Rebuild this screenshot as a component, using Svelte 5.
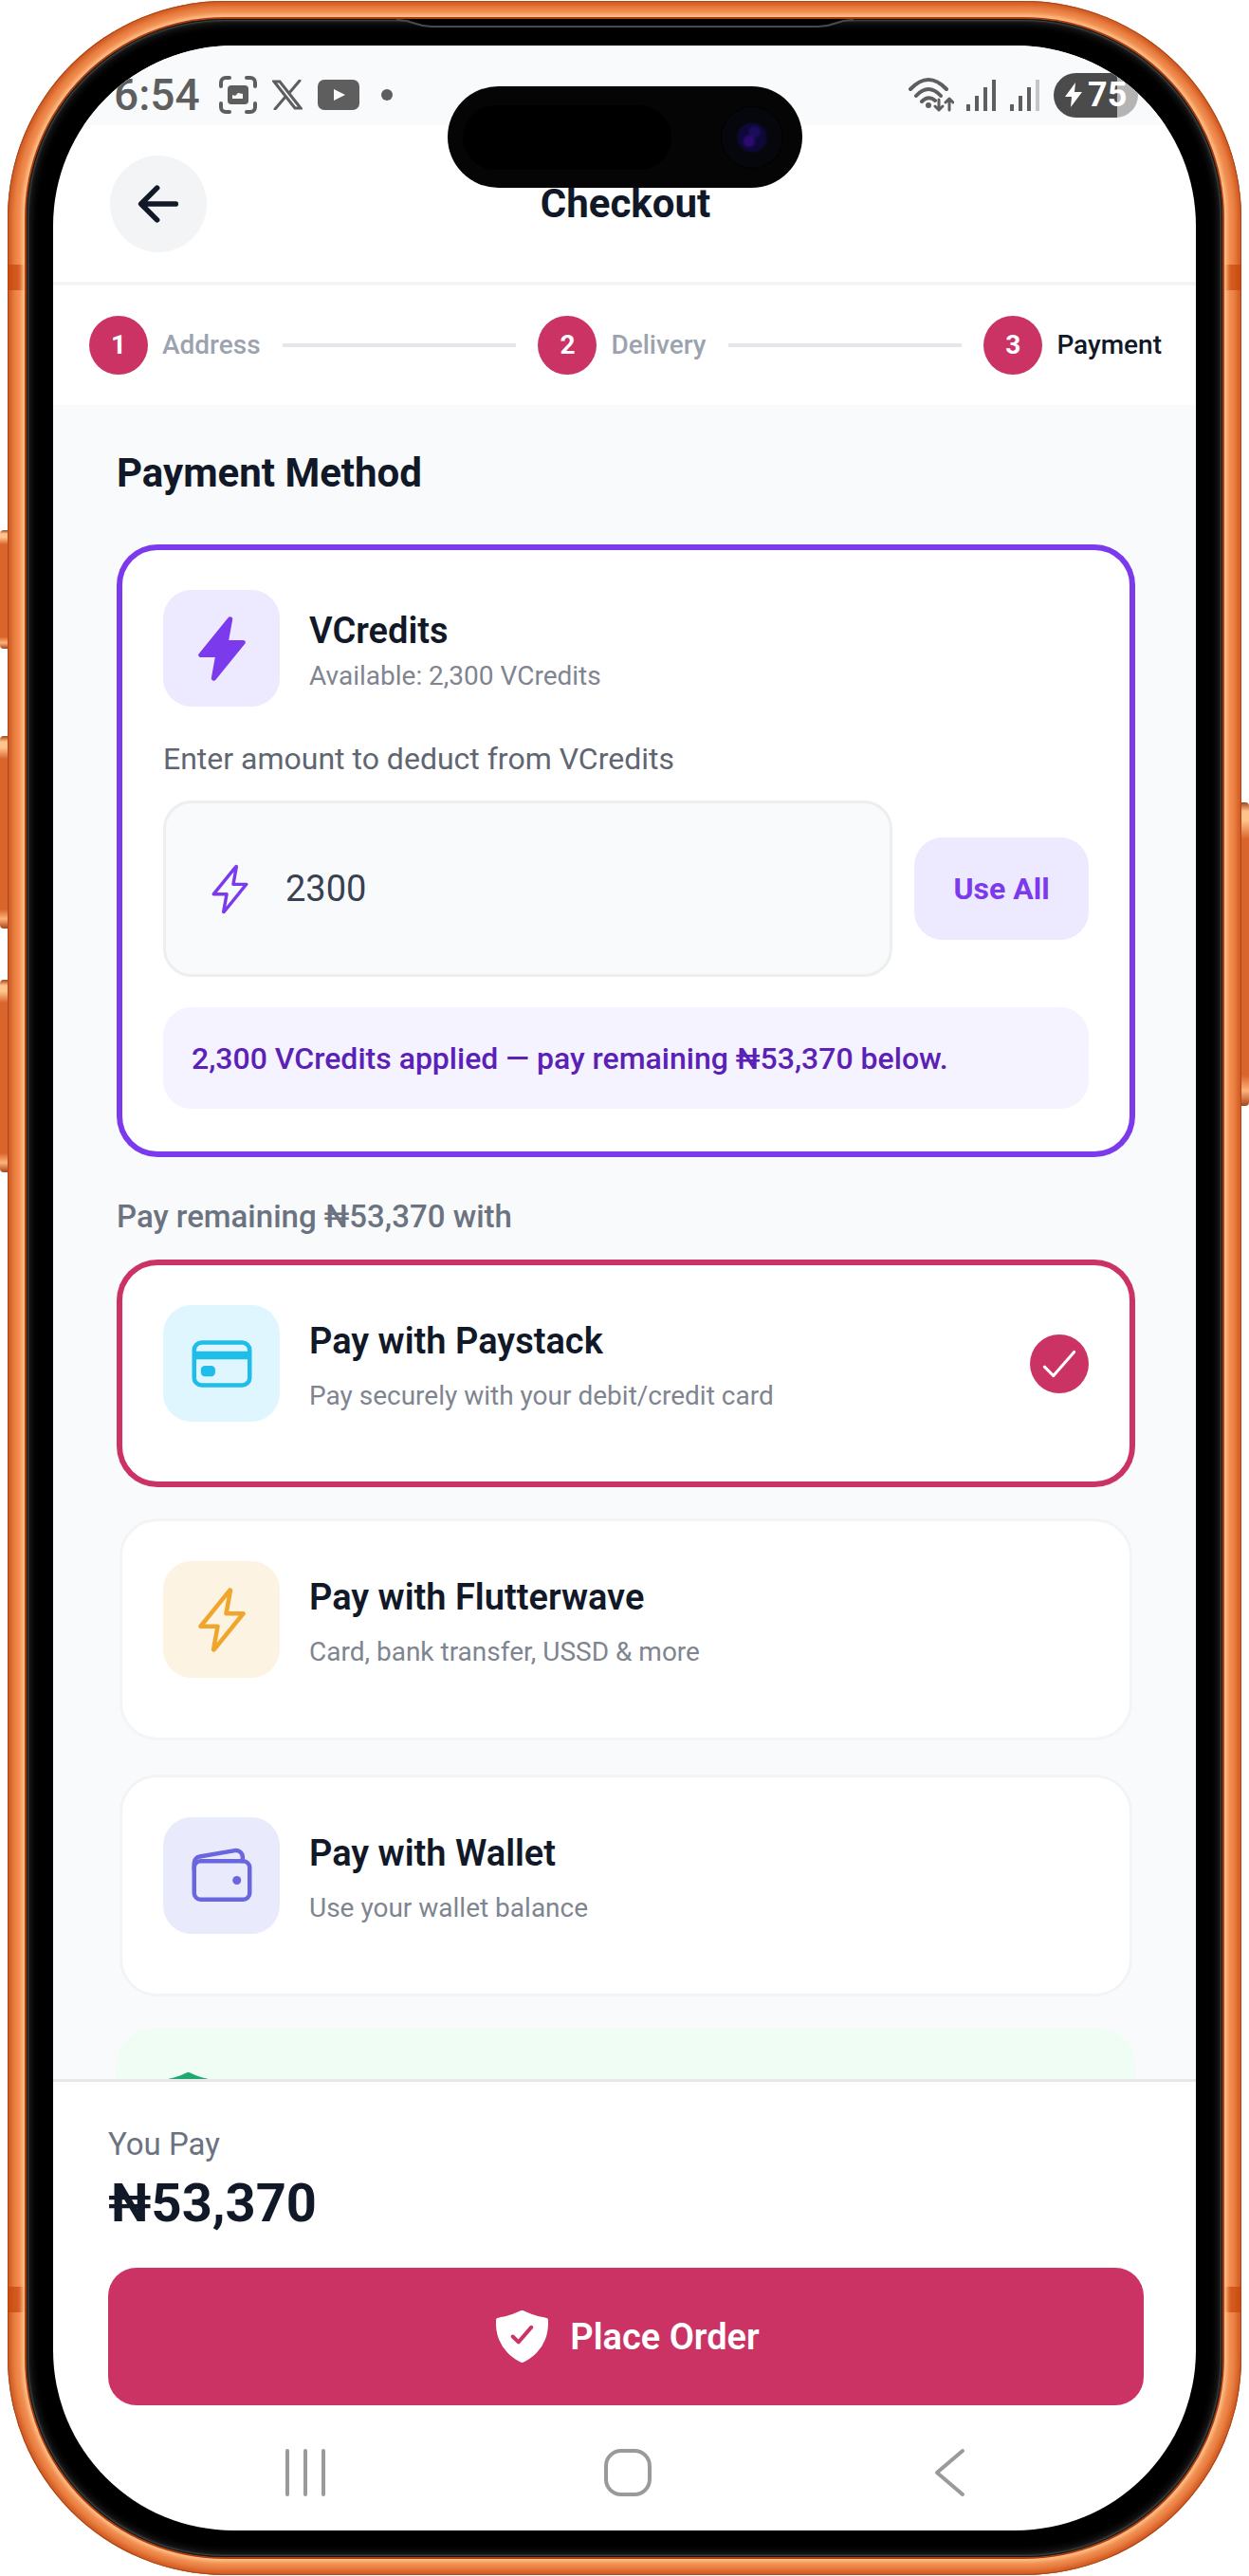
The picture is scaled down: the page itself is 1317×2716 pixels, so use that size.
<script lang="ts">
  type MethodIcon = "card" | "flash" | "wallet";

  interface PaymentMethod {
    id: string;
    title: string;
    hint: string;
    icon: MethodIcon;
  }

  const steps = ["Address", "Delivery", "Payment"];

  const methods: PaymentMethod[] = [
    {
      id: "paystack",
      title: "Pay with Paystack",
      hint: "Pay securely with your debit/credit card",
      icon: "card",
    },
    {
      id: "flutterwave",
      title: "Pay with Flutterwave",
      hint: "Card, bank transfer, USSD & more",
      icon: "flash",
    },
    {
      id: "wallet",
      title: "Pay with Wallet",
      hint: "Use your wallet balance",
      icon: "wallet",
    },
  ];

  const total = 55670;
  const available = 2300;

  let currentStep = $state(2);
  let selected = $state("paystack");
  let credits = $state("2300");

  const applied = $derived(Math.min(Number(credits) || 0, available));
  const remaining = $derived(total - applied);

  const format = (value: number) => value.toLocaleString("en-US");
</script>

{#snippet flash(filled: boolean)}
  <svg class="icon" class:filled viewBox="0 0 512 512" aria-hidden="true">
    <path
      d="M315.27 33L96 304h128l-31.51 173.23a2.36 2.36 0 002.33 2.77h0a2.36 2.36 0 001.89-.95L416 208H288l31.66-173.25a2.45 2.45 0 00-2.44-2.75h0a2.42 2.42 0 00-1.95 1z"
    />
  </svg>
{/snippet}

{#snippet shield()}
  <svg class="shield" viewBox="0 0 512 512" aria-hidden="true">
    <path
      d="M479.07 111.36a16 16 0 00-13.15-14.74c-86.5-15.52-122.61-26.74-203.33-63.2a16 16 0 00-13.18 0C168.69 69.88 132.58 81.1 46.08 96.62a16 16 0 00-13.15 14.74c-3.85 61.11 4.36 118.05 24.43 169.24A349.47 349.47 0 00129 393.11c53.47 56.73 110.24 81.37 121.07 85.73a16 16 0 0012 0c10.83-4.36 67.6-29 121.07-85.73A349.47 349.47 0 00454.64 280.6c20.07-51.19 28.28-108.13 24.43-169.24zm-131 75.11l-110.8 128a16 16 0 01-11.41 5.53h-.66a16 16 0 01-11.2-4.57l-49.2-48.2a16 16 0 1122.4-22.86l37 36.29 99.7-115.13a16 16 0 0124.17 20.94z"
    />
  </svg>
{/snippet}

{#snippet signal(last: string)}
  <svg class="signal" viewBox="0 0 33 34" aria-hidden="true">
    <path d="M2 27v7M11 18v16M20 9v25" />
    <path class={last} d="M29 1v33" />
  </svg>
{/snippet}

<div class="device">
  <span class="key key-action"></span>
  <span class="key key-up"></span>
  <span class="key key-down"></span>
  <span class="key key-power"></span>
  <span class="antenna antenna-top"></span>
  <span class="antenna antenna-bottom"></span>

  <div class="bezel">
    <svg class="speaker" viewBox="0 0 520 12" aria-hidden="true">
      <path class="speaker-gap" d="M20 0C38 0 38 8 56 8H464C482 8 482 0 500 0z" />
      <path d="M20 1C38 1 38 8 56 8H464C482 8 482 1 500 1" />
    </svg>

    <div class="screen">
      <div class="status-bar">
        <div class="status-group">
          <span class="clock">6:54</span>
          <svg class="status-shot" viewBox="0 0 40 40" aria-hidden="true">
            <path
              class="line"
              d="M2 11V7a5 5 0 015-5h4M29 2h4a5 5 0 015 5v4M38 29v4a5 5 0 01-5 5h-4M11 38H7a5 5 0 01-5-5v-4"
            />
            <rect x="9" y="10" width="22" height="20" rx="4" />
            <path class="hole" d="M14 24v-4l3 1 3-3 5 1v5z" />
          </svg>
          <svg class="status-x" viewBox="0 0 32 32" aria-hidden="true">
            <path class="line" d="M2 2h6l22 28h-6zM29 1L18 14M14 18L3 31" />
          </svg>
          <svg class="status-video" viewBox="0 0 44 32" aria-hidden="true">
            <rect width="44" height="32" rx="7" />
            <path class="hole" d="M17 10l12 6-12 6z" />
          </svg>
          <span class="status-dot"></span>
        </div>
        <div class="status-group status-right">
          <svg class="status-wifi" viewBox="0 0 48 36" aria-hidden="true">
            <path class="line" d="M2 12Q21-8 40 12M8 19Q21 5 34 19M14 25Q21 18 28 24" />
            <circle cx="21" cy="29" r="3" />
            <path class="line thin" d="M32 23v11M28 30l4 4 4-4M43 34V22M39 26l4-4 4 4" />
          </svg>
          {@render signal("full")}
          {@render signal("faint")}
          <span class="battery">
            <svg viewBox="0 0 20 28" aria-hidden="true">
              <path d="M12 1L1 16h7l-1 11 12-16h-8z" />
            </svg>
            75
          </span>
        </div>
      </div>

      <header class="header">
        <button class="back" type="button" aria-label="Go back">
          <svg viewBox="0 0 512 512" aria-hidden="true">
            <path d="M244 400L100 256l144-144M120 256h292" />
          </svg>
        </button>
        <h1>Checkout</h1>
      </header>

      <ol class="stepper">
        {#each steps as step, index}
          {#if index > 0}
            <li class="step-line" aria-hidden="true"></li>
          {/if}
          <li class="step" class:current={index === currentStep}>
            <span class="step-number">{index + 1}</span>
            {step}
          </li>
        {/each}
      </ol>

      <main class="content">
        <h2>Payment Method</h2>

        <section class="card credits">
          <div class="card-head">
            <span class="tile tile-violet">{@render flash(true)}</span>
            <div class="card-text">
              <h3>VCredits</h3>
              <p>Available: {format(available)} VCredits</p>
            </div>
          </div>
          <label class="field-label" for="credits">Enter amount to deduct from VCredits</label>
          <div class="field-row">
            <div class="field">
              {@render flash(false)}
              <input id="credits" type="text" inputmode="numeric" bind:value={credits} />
            </div>
            <button class="use-all" type="button" onclick={() => (credits = String(available))}>
              Use All
            </button>
          </div>
          <p class="applied">
            {format(applied)} VCredits applied — pay remaining ₦{format(remaining)} below.
          </p>
        </section>

        <p class="remaining">Pay remaining ₦{format(remaining)} with</p>

        <div class="methods" role="radiogroup" aria-label="Payment provider">
          {#each methods as method (method.id)}
            <label class="card method" class:selected={selected === method.id}>
              <input type="radio" name="method" value={method.id} bind:group={selected} />
              <span class={`tile tile-${method.icon}`}>
                {#if method.icon === "card"}
                  <svg class="icon" viewBox="0 0 512 512" aria-hidden="true">
                    <rect x="48" y="96" width="416" height="320" rx="56" />
                    <path class="heavy" d="M48 192h416M128 300h48v20h-48z" />
                  </svg>
                {:else if method.icon === "flash"}
                  {@render flash(false)}
                {:else}
                  <svg class="icon" viewBox="0 0 512 512" aria-hidden="true">
                    <rect x="48" y="144" width="416" height="288" rx="48" />
                    <path
                      d="M411.36 144v-30A50 50 0 00352 64.9L88.64 109.85A50 50 0 0048 159v49"
                    />
                    <circle class="dot" cx="368" cy="288" r="32" />
                  </svg>
                {/if}
              </span>
              <span class="card-text">
                <span class="method-title">{method.title}</span>
                <span class="method-hint">{method.hint}</span>
              </span>
              {#if selected === method.id}
                <span class="check">
                  <svg viewBox="0 0 512 512" aria-hidden="true">
                    <path d="M416 128L192 384l-96-96" />
                  </svg>
                </span>
              {/if}
            </label>
          {/each}
        </div>

        <div class="secure">{@render shield()}</div>
      </main>

      <footer class="footer">
        <p class="pay-label">You Pay</p>
        <p class="pay-amount">₦{format(remaining)}</p>
        <button class="place-order" type="button">
          {@render shield()}
          Place Order
        </button>
      </footer>

      <nav class="system-nav" aria-label="System">
        <button type="button" aria-label="Recent apps">
          <svg viewBox="0 0 52 52" aria-hidden="true"><path d="M7 3v46M26 3v46M45 3v46" /></svg>
        </button>
        <button type="button" aria-label="Home">
          <svg viewBox="0 0 52 52" aria-hidden="true">
            <rect x="3" y="3" width="46" height="46" rx="16" />
          </svg>
        </button>
        <button type="button" aria-label="Back">
          <svg viewBox="0 0 52 52" aria-hidden="true"><path d="M38 3L11 26l27 23" /></svg>
        </button>
      </nav>

      <div class="island">
        <span class="sensor"></span>
        <span class="lens"></span>
      </div>
    </div>
  </div>
</div>

<style>
  :global(body) {
    background: #ffffff;
  }

  .device {
    --ink: #111827;
    --muted: #6b7280;
    --brand: #cb3365;
    --violet: #7c3aed;
    --line: #e5e7eb;
    --soft: #f3f4f6;
    --surface: #f9fafb;

    box-sizing: border-box;
    position: relative;
    height: 100vh;
    border: solid transparent;
    border-width: 1px 8px;
    padding: 19px 20px;
    border-radius: 237px / 230px;
    background: #f08a4c padding-box;
    font-family: Roboto, "Liberation Sans", sans-serif;
    color: var(--ink);
  }
  .device *,
  .device *::before {
    box-sizing: border-box;
  }
  .device::before {
    content: "";
    position: absolute;
    inset: 0;
    border-radius: 229px;
    box-shadow:
      inset 0 0 0 1px #a8481c,
      inset 0 0 6px 5px #cf571f;
  }
  h1,
  h2,
  h3,
  p,
  ol {
    margin: 0;
    padding: 0;
  }
  button {
    border: 0;
    padding: 0;
    font: inherit;
    color: inherit;
    cursor: pointer;
  }
  svg {
    display: block;
    flex: none;
    fill: none;
    stroke: currentColor;
    stroke-linecap: round;
    stroke-linejoin: round;
  }

  /* hardware */
  .key {
    position: absolute;
    width: 8px;
    left: -8px;
    border-radius: 4px 0 0 4px;
    background: linear-gradient(#a8441a, #ffc48c 3%, #ffc48c 6%, #d9652c 12%, #d9652c 90%, #ffb27a 95%, #a8441a);
  }
  .key-action {
    top: 558px;
    height: 125px;
  }
  .key-up {
    top: 775px;
    height: 203px;
  }
  .key-down {
    top: 1032px;
    height: 203px;
  }
  .key-power {
    top: 845px;
    right: -8px;
    left: auto;
    height: 320px;
    border-radius: 0 4px 4px 0;
  }
  .antenna {
    position: absolute;
    right: 0;
    left: 0;
    height: 27px;
    background: rgba(196, 66, 8, 0.65);
  }
  .antenna-top {
    top: 278px;
  }
  .antenna-bottom {
    bottom: 277px;
  }
  .bezel {
    position: relative;
    height: 100%;
    padding: 28px;
    border-radius: 209px;
    background: #000000;
    box-shadow:
      inset 0 0 0 1px #141414,
      inset 0 0 2px 2px #4a4a4a,
      inset 0 0 8px 4px #262626,
      0 0 0 2px #ad3d0c,
      0 0 4px 5px #ffc48e;
  }
  .speaker {
    position: absolute;
    top: 0;
    left: 50%;
    width: 520px;
    height: 12px;
    transform: translateX(-50%);
    color: #4a4a4a;
    stroke-width: 2;
  }
  .speaker-gap {
    fill: #000000;
    stroke: none;
  }
  .screen {
    position: relative;
    display: flex;
    flex-direction: column;
    height: 100%;
    overflow: hidden;
    border-radius: 190px;
    background: #ffffff;
  }
  .island {
    position: absolute;
    top: 43px;
    left: 50%;
    display: flex;
    align-items: center;
    justify-content: space-between;
    width: 374px;
    height: 107px;
    padding: 0 20px 0 16px;
    border-radius: 54px;
    background: #050505;
    transform: translateX(-50%);
  }
  .sensor {
    width: 220px;
    height: 68px;
    border-radius: 34px;
    background: #000000;
  }
  .lens {
    width: 66px;
    height: 66px;
    border: 1px solid #000000;
    border-radius: 50%;
    background:
      radial-gradient(circle at 45% 56%, #2c0a70 0 4px, transparent 8px),
      radial-gradient(circle at 54% 41%, #1b0d5c 0 4px, transparent 8px),
      radial-gradient(circle, #0d0838 0 14px, #06070c 17px);
  }

  /* status bar */
  .status-bar {
    display: flex;
    flex: none;
    align-items: center;
    justify-content: space-between;
    height: 84px;
    padding: 20px 61px 0 64px;
    background: var(--surface);
    color: #5e5e5e;
  }
  .status-group {
    display: flex;
    align-items: center;
    gap: 16px;
  }
  .status-right {
    gap: 13px;
  }
  .clock {
    margin-right: 4px;
    font-size: 46px;
    font-weight: 500;
    line-height: 52px;
  }
  .status-group svg {
    fill: currentColor;
    stroke: none;
  }
  .status-group .line {
    fill: none;
    stroke: currentColor;
    stroke-width: 4;
  }
  .status-group .thin {
    stroke-width: 3;
  }
  .status-group .hole {
    fill: var(--surface);
  }
  .status-shot {
    width: 40px;
    height: 40px;
  }
  .status-x {
    width: 32px;
    height: 32px;
  }
  .status-x .line {
    stroke-width: 3;
    stroke-linejoin: miter;
  }
  .status-video {
    width: 44px;
    height: 32px;
  }
  .status-dot {
    width: 12px;
    height: 12px;
    margin-left: 7px;
    border-radius: 50%;
    background: currentColor;
  }
  .status-wifi {
    width: 48px;
    height: 36px;
  }
  .signal {
    width: 33px;
    height: 34px;
  }
  .status-group .signal path {
    stroke: currentColor;
    stroke-width: 4;
    stroke-linecap: butt;
  }
  .status-group .signal .faint {
    stroke: #c4c5c6;
  }
  .battery {
    display: flex;
    align-items: center;
    gap: 5px;
    width: 89px;
    height: 47px;
    padding-left: 11px;
    border-radius: 24px;
    background: linear-gradient(90deg, #4b4b4b 75%, #b4b4b4 75%);
    color: #ffffff;
    font-size: 36px;
    font-weight: 700;
    line-height: 47px;
  }
  .battery svg {
    width: 20px;
    height: 28px;
  }

  /* header */
  .header {
    display: grid;
    flex: none;
    grid-template-columns: 102px 1fr 102px;
    align-items: center;
    padding: 32px 58px 31px 60px;
    border-bottom: 4px solid var(--soft);
  }
  .back {
    display: grid;
    place-items: center;
    width: 102px;
    height: 102px;
    border-radius: 50%;
    background: var(--soft);
  }
  .back svg {
    width: 60px;
    height: 60px;
    stroke-width: 48;
  }
  h1,
  h2 {
    font-size: 42px;
    font-weight: 700;
    line-height: 50px;
  }
  h1 {
    text-align: center;
  }

  .stepper {
    display: flex;
    flex: none;
    align-items: center;
    gap: 23px;
    padding: 32px 36px 32px 38px;
    list-style: none;
  }
  .step {
    display: flex;
    align-items: center;
    gap: 15px;
    color: #9ca3af;
    font-size: 28px;
    font-weight: 500;
    line-height: 36px;
  }
  .step.current {
    color: var(--ink);
  }
  .step-number {
    display: grid;
    place-items: center;
    width: 62px;
    height: 62px;
    border-radius: 50%;
    background: var(--brand);
    color: #ffffff;
    font-weight: 700;
  }
  .step-line {
    flex: 1;
    height: 4px;
    background: var(--line);
  }

  /* content */
  .content {
    flex: 1;
    min-height: 0;
    overflow: hidden;
    padding: 47px 64px 0 67px;
    background: var(--surface);
  }
  .card {
    margin: 3px;
    border: 3px solid var(--soft);
    border-radius: 40px;
    background: #ffffff;
  }
  .credits {
    margin-top: 53px;
    padding: 42px 43px 45px;
    border-color: var(--violet);
    box-shadow: 0 0 0 3px var(--violet);
  }
  .card-head {
    display: flex;
    align-items: center;
    gap: 31px;
  }
  .tile {
    display: grid;
    flex: none;
    place-items: center;
    width: 123px;
    height: 123px;
    border-radius: 30px;
  }
  .icon {
    width: 72px;
    height: 72px;
    stroke-width: 32;
  }
  .icon.filled {
    fill: currentColor;
  }
  .icon .heavy {
    stroke-width: 60;
    stroke-linecap: butt;
  }
  .icon .dot {
    fill: currentColor;
    stroke: none;
  }
  .tile-violet {
    background: #ede9fe;
    color: var(--violet);
  }
  .tile-card {
    background: #dff6ff;
    color: #1fbdea;
  }
  .tile-flash {
    background: #fdf3e3;
    color: #f0a52c;
  }
  .tile-wallet {
    background: #eaeafd;
    color: #6a66e0;
  }
  .card-text {
    display: flex;
    flex: 1;
    flex-direction: column;
    gap: 8px;
    padding-top: 6px;
  }
  h3,
  .method-title {
    font-size: 38px;
    font-weight: 600;
    line-height: 44px;
  }
  .card-text p,
  .method-hint {
    color: #7f8590;
    font-size: 28px;
    line-height: 36px;
  }
  .field-label {
    display: block;
    margin: 35px 0 24px;
    color: #5f6672;
    font-size: 32px;
    line-height: 40px;
  }
  .field-row {
    display: flex;
    align-items: center;
    gap: 23px;
  }
  .field {
    display: flex;
    flex: 1;
    align-items: center;
    gap: 31px;
    min-width: 0;
    height: 186px;
    padding: 0 40px;
    border: 3px solid #eceef0;
    border-radius: 30px;
    background: var(--surface);
    color: var(--violet);
  }
  .field .icon {
    width: 55px;
    height: 55px;
  }
  .field input {
    flex: 1;
    min-width: 0;
    border: 0;
    padding: 0;
    outline: none;
    background: none;
    color: #374151;
    font: inherit;
    font-size: 38px;
    line-height: 44px;
  }
  .use-all {
    width: 184px;
    height: 108px;
    border-radius: 30px;
    background: #ede9fe;
    color: var(--violet);
    font-size: 32px;
    font-weight: 700;
  }
  .applied {
    margin-top: 32px;
    padding: 34px 30px 33px;
    border-radius: 30px;
    background: #f5f3ff;
    color: #5b21b6;
    font-size: 32px;
    font-weight: 500;
    line-height: 40px;
  }
  .remaining {
    margin: 46px 0 25px;
    color: var(--muted);
    font-size: 33px;
    font-weight: 500;
    line-height: 40px;
  }
  .methods {
    display: flex;
    flex-direction: column;
    gap: 30px;
  }
  .method {
    position: relative;
    display: flex;
    align-items: center;
    gap: 31px;
    padding: 42px 43px 63px;
    cursor: pointer;
  }
  .method.selected {
    border-color: var(--brand);
    box-shadow: 0 0 0 3px var(--brand);
  }
  .method input {
    position: absolute;
    opacity: 0;
  }
  .method .card-text {
    gap: 18px;
  }
  .check {
    display: grid;
    place-items: center;
    width: 62px;
    height: 62px;
    border-radius: 50%;
    background: var(--brand);
    color: #ffffff;
  }
  .check svg {
    width: 50px;
    height: 50px;
    stroke-width: 32;
  }
  .shield {
    width: 63px;
    height: 63px;
    fill: currentColor;
    stroke: none;
  }
  .secure {
    margin-top: 30px;
    padding: 43px 44px;
    border-radius: 40px;
    background: #f0fdf4;
    color: #1fa971;
  }

  /* footer */
  .footer {
    flex: none;
    padding: 46px 55px 0 58px;
    border-top: 3px solid var(--line);
  }
  .pay-label {
    color: var(--muted);
    font-size: 33px;
    line-height: 40px;
  }
  .pay-amount {
    margin: 10px 0 36px;
    font-size: 56px;
    font-weight: 700;
    line-height: 64px;
  }
  .place-order {
    display: flex;
    align-items: center;
    justify-content: center;
    gap: 19px;
    width: 100%;
    height: 145px;
    border-radius: 30px;
    background: var(--brand);
    color: #ffffff;
    font-size: 38px;
    font-weight: 600;
  }
  .system-nav {
    display: grid;
    flex: none;
    grid-template-columns: repeat(3, 1fr);
    place-items: center;
    height: 132px;
    padding: 10px 88px 0 96px;
    color: #9a9a9a;
  }
  .system-nav button {
    background: none;
  }
  .system-nav svg {
    width: 52px;
    height: 52px;
    stroke-width: 4;
  }
</style>
